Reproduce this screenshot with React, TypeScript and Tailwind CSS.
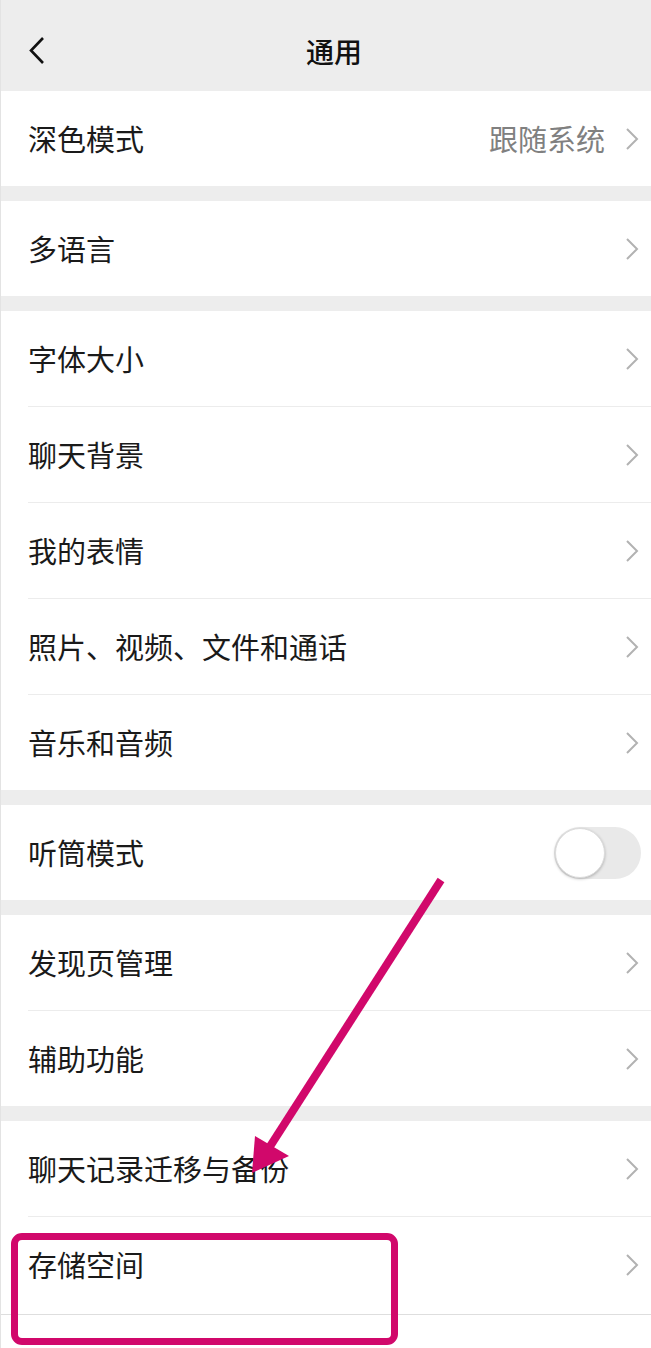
import React from "react";

const font = { fontFamily: '"Noto Sans CJK SC", "Noto Sans", sans-serif' };

function Chevron() {
  return (
    <svg width="14" height="24" viewBox="0 0 14 24" className="shrink-0">
      <path d="M2 2 L12 12 L2 22" fill="none" stroke="#b2b2b2" strokeWidth="2" strokeLinejoin="miter" />
    </svg>
  );
}

function Row({ label, value, last }: { label: string; value?: string; last?: boolean }) {
  return (
    <div className="bg-white">
      <div className="h-[95px] flex items-center pl-[27px] pr-[12px]">
        <span className="flex-1 text-[29px] text-[#1a1a1a] leading-none">{label}</span>
        {value && <span className="text-[29px] text-[#808080] mr-[20px] leading-none">{value}</span>}
        <Chevron />
      </div>
      {!last && <div className="ml-[27px] h-px bg-[#ececec]" />}
    </div>
  );
}

function Gap() {
  return <div className="h-[15px] bg-[#ededed]" />;
}

export default function App() {
  return (
    <div className="relative w-[651px] h-[1348px] bg-white overflow-hidden border-l border-[#e3e3e3]" style={font}>
      <div className="h-[91px] bg-[#ededed] flex items-center relative pt-[10px] pl-[16px]">
        <svg width="20" height="30" viewBox="0 0 20 30" className="absolute left-[26px] top-[36px]">
          <path d="M16 2 L4 14.5 L16 27" fill="none" stroke="#111" strokeWidth="2.6" />
        </svg>
        <div className="flex-1 text-center text-[28px] text-[#111] font-medium leading-none">通用</div>
      </div>

      <Row label="深色模式" value="跟随系统" last />
      <Gap />
      <Row label="多语言" last />
      <Gap />
      <Row label="字体大小" />
      <Row label="聊天背景" />
      <Row label="我的表情" />
      <Row label="照片、视频、文件和通话" />
      <Row label="音乐和音频" last />
      <Gap />
      <div className="bg-white h-[95px] flex items-center pl-[27px] pr-[10px]">
        <span className="flex-1 text-[29px] text-[#1a1a1a] leading-none">听筒模式</span>
        <div className="w-[87px] h-[52px] rounded-full bg-[#e9e9e9] p-[1px] flex items-center">
          <div className="w-[50px] h-[50px] rounded-full bg-white shadow-[0_1px_3px_rgba(0,0,0,0.25)] border border-[#dcdcdc]" />
        </div>
      </div>
      <Gap />
      <Row label="发现页管理" />
      <Row label="辅助功能" last />
      <Gap />
      <Row label="聊天记录迁移与备份" />
      <Row label="存储空间" last />
      <div className="mt-[2px] h-px bg-[#dedede]" />

      <svg className="absolute left-0 top-0 pointer-events-none" width="651" height="1348">
        <line x1="440" y1="880" x2="268" y2="1148" stroke="#d1086b" strokeWidth="8" />
        <polygon points="254,1136 288,1156 251,1173" fill="#d1086b" />
      </svg>
      <div className="absolute left-[10px] top-[1233px] w-[387px] h-[112px] rounded-[11px] border-[7px] border-[#d1086b]" />
    </div>
  );
}
